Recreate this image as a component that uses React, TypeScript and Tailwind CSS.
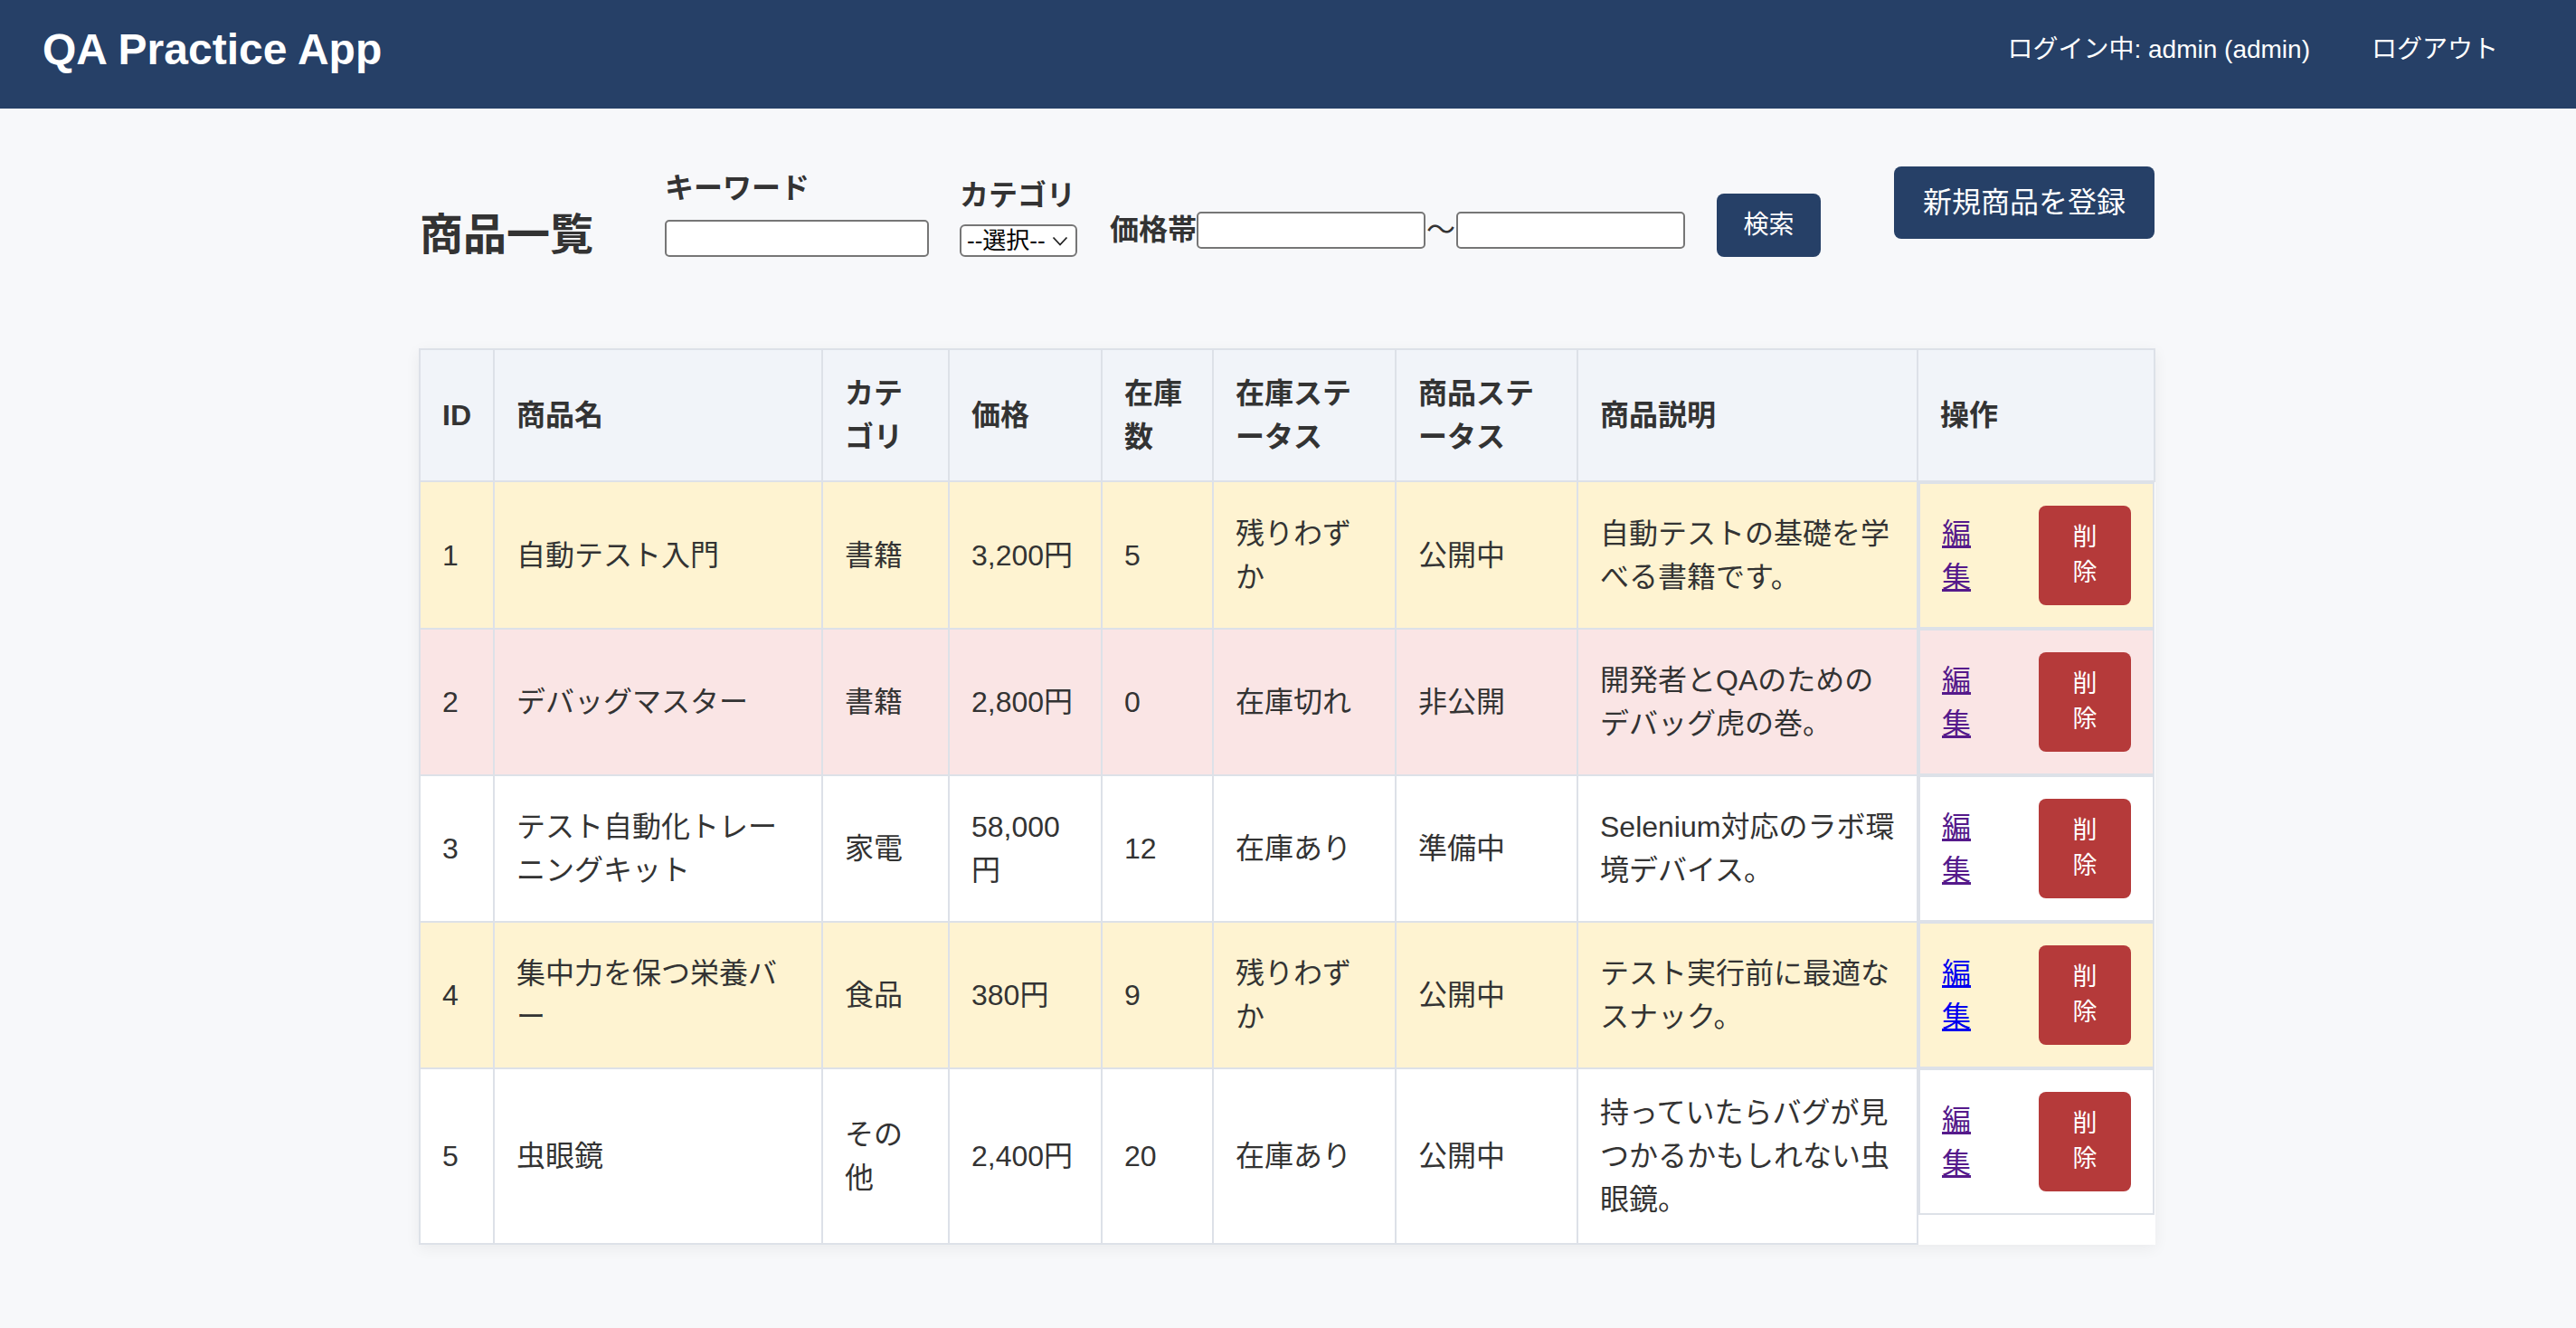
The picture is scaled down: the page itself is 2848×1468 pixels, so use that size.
import React from "react";

type Tone = "warn" | "danger" | "none";

type Product = {
  id: number;
  name: string;
  category: string;
  price: string;
  stock: number;
  stockStatus: string;
  status: string;
  description: string;
  tone: Tone;
  visited: boolean;
};

const products: Product[] = [
  {
    id: 1,
    name: "自動テスト入門",
    category: "書籍",
    price: "3,200円",
    stock: 5,
    stockStatus: "残りわずか",
    status: "公開中",
    description: "自動テストの基礎を学べる書籍です。",
    tone: "warn",
    visited: true,
  },
  {
    id: 2,
    name: "デバッグマスター",
    category: "書籍",
    price: "2,800円",
    stock: 0,
    stockStatus: "在庫切れ",
    status: "非公開",
    description: "開発者とQAのためのデバッグ虎の巻。",
    tone: "danger",
    visited: true,
  },
  {
    id: 3,
    name: "テスト自動化トレーニングキット",
    category: "家電",
    price: "58,000円",
    stock: 12,
    stockStatus: "在庫あり",
    status: "準備中",
    description: "Selenium対応のラボ環境デバイス。",
    tone: "none",
    visited: true,
  },
  {
    id: 4,
    name: "集中力を保つ栄養バー",
    category: "食品",
    price: "380円",
    stock: 9,
    stockStatus: "残りわずか",
    status: "公開中",
    description: "テスト実行前に最適なスナック。",
    tone: "warn",
    visited: false,
  },
  {
    id: 5,
    name: "虫眼鏡",
    category: "その他",
    price: "2,400円",
    stock: 20,
    stockStatus: "在庫あり",
    status: "公開中",
    description: "持っていたらバグが見つかるかもしれない虫眼鏡。",
    tone: "none",
    visited: true,
  },
];

const rowBg: Record<Tone, string> = {
  warn: "bg-[#fef3d1]",
  danger: "bg-[#fae5e5]",
  none: "bg-white",
};

const headers = [
  "ID",
  "商品名",
  "カテゴリ",
  "価格",
  "在庫数",
  "在庫ステータス",
  "商品ステータス",
  "商品説明",
  "操作",
];

const cell = "border-2 border-[#dde1e8] px-6 py-6 text-left align-middle";

export default function App() {
  return (
    <div className="min-h-screen bg-[#f7f8fa] text-[32px] leading-[48px] text-[#333333] [font-family:'Liberation_Sans','Noto_Sans_CJK_JP',sans-serif]">
      {/* Top bar */}
      <header className="flex h-[120px] items-center justify-between bg-[#264067] pb-[10px] pl-[47px] pr-[86px] text-white">
        <h1 className="text-[48px] font-bold leading-[56px]">QA Practice App</h1>
        <nav className="flex items-center gap-[68px] whitespace-nowrap text-[28px] leading-[40px]">
          <span>ログイン中: admin (admin)</span>
          <a href="#">ログアウト</a>
        </nav>
      </header>

      <main className="mx-auto w-[1920px] pb-[40px] pt-[64px]">
        {/* Title + search */}
        <div className="flex items-start justify-between">
          <div className="flex items-end">
            <h2 className="text-[48px] font-bold leading-[48px]">商品一覧</h2>
            <form className="ml-[79px] flex items-end">
              <div className="flex flex-col gap-[11px]">
                <label className="font-bold">キーワード</label>
                <input
                  type="text"
                  className="h-[41px] w-[292px] rounded-[5px] border-2 border-[#767676] bg-white px-2 text-[26px]"
                />
              </div>
              <div className="ml-[34px] flex flex-col gap-[8px]">
                <label className="font-bold">カテゴリ</label>
                <div className="flex h-[36px] w-[130px] items-center justify-between rounded-[6px] border-2 border-[#767676] bg-white pl-[6px] pr-[8px] text-[26px] leading-[32px] text-black">
                  <span>--選択--</span>
                  <svg width="18" height="11" viewBox="0 0 18 11" fill="none">
                    <path d="M1.5 1.5 9 9.5l7.5-8" stroke="#222" strokeWidth="1.8" />
                  </svg>
                </div>
              </div>
              <div className="mb-[6px] ml-[36px] flex items-center">
                <label className="font-bold">価格帯</label>
                <input
                  type="number"
                  className="h-[41px] w-[253px] rounded-[5px] border-2 border-[#767676] bg-white px-2 text-[26px]"
                />
                <span className="w-[34px] text-center">〜</span>
                <input
                  type="number"
                  className="h-[41px] w-[253px] rounded-[5px] border-2 border-[#767676] bg-white px-2 text-[26px]"
                />
              </div>
              <button
                type="button"
                className="ml-[35px] h-[70px] w-[115px] rounded-lg bg-[#264067] text-[28px] leading-[40px] text-white"
              >
                検索
              </button>
            </form>
          </div>
          <button
            type="button"
            className="mr-[2px] rounded-lg bg-[#264067] px-8 py-4 text-[32px] leading-[48px] text-white"
          >
            新規商品を登録
          </button>
        </div>

        {/* Product table */}
        <table className="-ml-[1px] mt-[101px] w-[1918px] table-fixed bg-white shadow-[0_4px_16px_rgba(0,0,0,0.06)]">
          <colgroup>
            <col className="w-[82px]" />
            <col className="w-[363px]" />
            <col className="w-[140px]" />
            <col className="w-[169px]" />
            <col className="w-[123px]" />
            <col className="w-[202px]" />
            <col className="w-[201px]" />
            <col className="w-[376px]" />
            <col className="w-[262px]" />
          </colgroup>
          <thead>
            <tr>
              {headers.map((h) => (
                <th key={h} className={`${cell} bg-[#f1f4f9] font-bold`}>
                  {h}
                </th>
              ))}
            </tr>
          </thead>
          <tbody>
            {products.map((p) => {
              const bg = rowBg[p.tone];
              return (
                <tr key={p.id}>
                  <td className={`${cell} ${bg}`}>{p.id}</td>
                  <td className={`${cell} ${bg}`}>{p.name}</td>
                  <td className={`${cell} ${bg}`}>{p.category}</td>
                  <td className={`${cell} ${bg}`}>{p.price}</td>
                  <td className={`${cell} ${bg}`}>{p.stock}</td>
                  <td className={`${cell} ${bg}`}>{p.stockStatus}</td>
                  <td className={`${cell} ${bg}`}>{p.status}</td>
                  <td className={`${cell} ${bg}`}>{p.description}</td>
                  {/* flex on the td, as the original page does */}
                  <td className={`flex items-center justify-between border-2 border-[#dde1e8] px-6 py-6 ${bg}`}>
                    <a
                      href="#"
                      className={`w-[32px] underline ${p.visited ? "text-[#551a8b]" : "text-[#0000ee]"}`}
                    >
                      編集
                    </a>
                    <button
                      type="button"
                      className="w-[102px] rounded-lg bg-[#b53a3a] px-8 py-4 text-[27px] leading-[39px] text-white"
                    >
                      削除
                    </button>
                  </td>
                </tr>
              );
            })}
          </tbody>
        </table>
      </main>
    </div>
  );
}
